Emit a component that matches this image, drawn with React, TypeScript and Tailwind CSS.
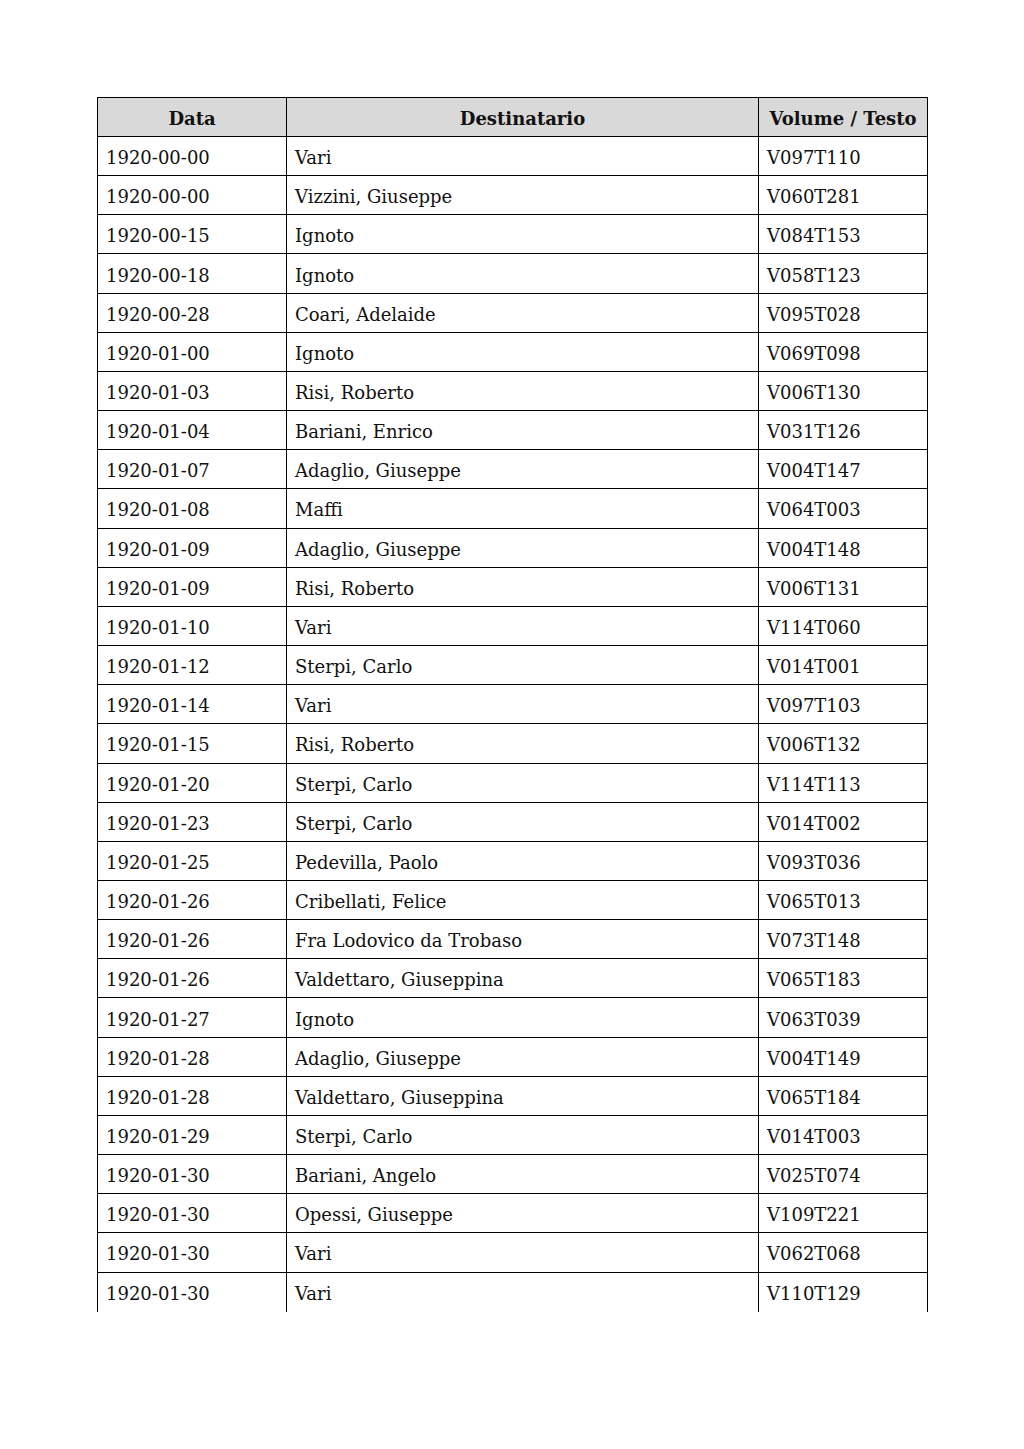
const rows: [string, string, string][] = [
  ["1920-00-00", "Vari", "V097T110"],
  ["1920-00-00", "Vizzini, Giuseppe", "V060T281"],
  ["1920-00-15", "Ignoto", "V084T153"],
  ["1920-00-18", "Ignoto", "V058T123"],
  ["1920-00-28", "Coari, Adelaide", "V095T028"],
  ["1920-01-00", "Ignoto", "V069T098"],
  ["1920-01-03", "Risi, Roberto", "V006T130"],
  ["1920-01-04", "Bariani, Enrico", "V031T126"],
  ["1920-01-07", "Adaglio, Giuseppe", "V004T147"],
  ["1920-01-08", "Maffi", "V064T003"],
  ["1920-01-09", "Adaglio, Giuseppe", "V004T148"],
  ["1920-01-09", "Risi, Roberto", "V006T131"],
  ["1920-01-10", "Vari", "V114T060"],
  ["1920-01-12", "Sterpi, Carlo", "V014T001"],
  ["1920-01-14", "Vari", "V097T103"],
  ["1920-01-15", "Risi, Roberto", "V006T132"],
  ["1920-01-20", "Sterpi, Carlo", "V114T113"],
  ["1920-01-23", "Sterpi, Carlo", "V014T002"],
  ["1920-01-25", "Pedevilla, Paolo", "V093T036"],
  ["1920-01-26", "Cribellati, Felice", "V065T013"],
  ["1920-01-26", "Fra Lodovico da Trobaso", "V073T148"],
  ["1920-01-26", "Valdettaro, Giuseppina", "V065T183"],
  ["1920-01-27", "Ignoto", "V063T039"],
  ["1920-01-28", "Adaglio, Giuseppe", "V004T149"],
  ["1920-01-28", "Valdettaro, Giuseppina", "V065T184"],
  ["1920-01-29", "Sterpi, Carlo", "V014T003"],
  ["1920-01-30", "Bariani, Angelo", "V025T074"],
  ["1920-01-30", "Opessi, Giuseppe", "V109T221"],
  ["1920-01-30", "Vari", "V062T068"],
  ["1920-01-30", "Vari", "V110T129"],
];

export default function App() {
  return (
    <div className="w-[1024px] h-[1449px] bg-white pt-[97px] pl-[97px] text-[#111] text-[18px]" style={{ fontFamily: '"DejaVu Serif", "Liberation Serif", serif' }}>
      <div className="w-[831px] border-l border-black">
        <div className="grid grid-cols-[189px_472px_169px] h-[40px] bg-[#d9d9d9] border-t border-b border-black font-bold">
          <div className="border-r border-black flex items-center justify-center pt-[3px]">Data</div>
          <div className="border-r border-black flex items-center justify-center pt-[3px]">Destinatario</div>
          <div className="border-r border-black flex items-center justify-center pt-[3px]">Volume / Testo</div>
        </div>
        {rows.map((r, i) => (
          <div
            key={i}
            className={`grid grid-cols-[189px_472px_169px] h-[39.17px] ${i < rows.length - 1 ? "border-b border-black" : ""}`}
          >
            <div className="border-r border-black flex items-center pl-[8px] pt-[3px]">{r[0]}</div>
            <div className="border-r border-black flex items-center pl-[8px] pt-[3px]">{r[1]}</div>
            <div className="border-r border-black flex items-center pl-[8px] pt-[3px]">{r[2]}</div>
          </div>
        ))}
      </div>
    </div>
  );
}
